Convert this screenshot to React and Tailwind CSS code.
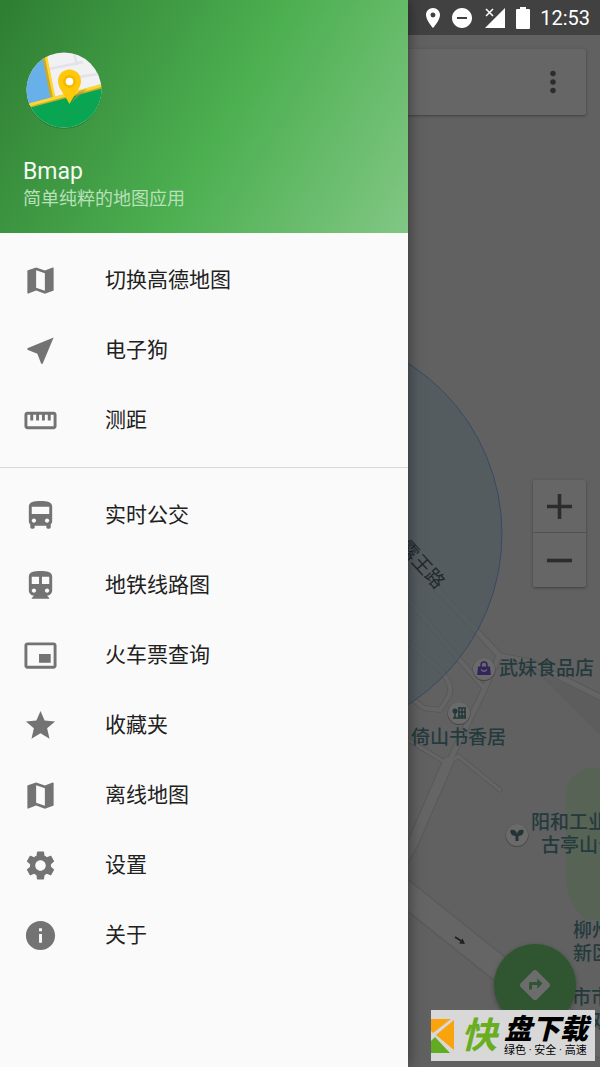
import React from 'react';
import {
    MdAdd,
    MdDirections,
    MdDirectionsBus,
    MdDirectionsSubway,
    MdDoNotDisturbOn,
    MdInfo,
    MdLocationOn,
    MdMap,
    MdMoreVert,
    MdNearMe,
    MdPictureInPictureAlt,
    MdRemove,
    MdSettings,
    MdStar,
    MdStraighten,
} from 'react-icons/md';

const tools = [
    { label: '切换高德地图', icon: MdMap },
    { label: '电子狗', icon: MdNearMe },
    { label: '测距', icon: MdStraighten },
];

const services = [
    { label: '实时公交', icon: MdDirectionsBus },
    { label: '地铁线路图', icon: MdDirectionsSubway },
    { label: '火车票查询', icon: MdPictureInPictureAlt },
    { label: '收藏夹', icon: MdStar },
    { label: '离线地图', icon: MdMap },
    { label: '设置', icon: MdSettings },
    { label: '关于', icon: MdInfo },
];

const Logo = () => (
    <svg viewBox="0 0 82 82" className="w-[82px] h-[82px]" aria-hidden="true">
        <defs>
            <clipPath id="logo-clip">
                <circle cx="41" cy="41" r="37.5" />
            </clipPath>
        </defs>
        <circle cx="41" cy="42.5" r="37.5" fill="#1b5e20" opacity="0.35" />
        <g clipPath="url(#logo-clip)">
            <rect width="82" height="82" fill="#f1f1f4" />
            <path d="M26 20 60 13M56 28 80 24M50 0l4 16" stroke="#e2e2e8" strokeWidth="2.500" fill="none" />
            <path d="M0 0h20l10 50L0 58Z" fill="#68b0ea" />
            <path d="M20 0 30 50" stroke="#d0a827" strokeWidth="4.500" />
            <path d="M21.500 0 31.500 50" stroke="#fdd835" strokeWidth="2.500" />
            <path d="M0 59 82 37v45H0Z" fill="#08a653" />
            <path d="M28 70 74 56M40 60l6 22" stroke="#12a04f" strokeWidth="2" />
            <path d="M0 58.500 82 36.500" stroke="#c9b22a" strokeWidth="4" />
            <path d="M0 57.500 82 35.500" stroke="#fdd835" strokeWidth="3" />
            <path d="M48 54 64 40 56 42Z" fill="#a8963a" opacity="0.6" />
        </g>
        <path d="M46.500 20.500C40 20.500 35 25.500 35 32c0 7.500 6.500 13 11.500 23C51.500 45 58 39.500 58 32c0-6.500-5-11.500-11.500-11.500Z" fill="#ffc80a" />
        <circle cx="46.500" cy="32.500" r="6.500" fill="#f6b900" />
        <circle cx="46.500" cy="32.500" r="3.800" fill="#fff" />
    </svg>
);

const MenuItem = ({ label, icon: Icon }) => (
    <li>
        <button type="button" className="flex h-[70px] w-full items-center gap-[47px] pl-[23px] text-left">
            <Icon className="size-[35px] shrink-0 text-[#737373]" />
            <span className="text-[21px] leading-7 text-[#212121]">{label}</span>
        </button>
    </li>
);

const Drawer = () => (
    <aside className="absolute inset-y-0 left-0 z-20 w-[68%] bg-[#fafafa] shadow-[0_0_14px_rgba(0,0,0,0.5)]">
        <header className="flex h-[233px] flex-col bg-[linear-gradient(120deg,#2e7d32,#4caf50_54%,#81c784)] pt-[49px] pl-[23px]">
            <Logo />
            <h1 className="mt-[26px] text-[23px] leading-[30px] text-[#f4fbf4]">Bmap</h1>
            <p className="text-lg leading-6 text-[#b8e0b9]">简单纯粹的地图应用</p>
        </header>
        <nav>
            <ul className="py-3">
                {tools.map((item) => <MenuItem key={item.label} {...item} />)}
            </ul>
            <ul className="border-t border-[#d8d8d8] py-3">
                {services.map((item) => <MenuItem key={item.label} {...item} />)}
            </ul>
        </nav>
    </aside>
);

// Roads, parks and the accuracy circle
const MapCanvas = () => (
    <svg
        viewBox="0 0 600 1067"
        preserveAspectRatio="xMaxYMin slice"
        className="absolute inset-0 h-full w-full"
        aria-hidden="true"
    >
        <path d="M540 675 600 735V697Z" fill="#5d5d5d" />
        <path d="M600 768h-14q-20 8-20 28v82q2 30 22 42h12Z" fill="#566355" />
        <g fill="none" strokeLinecap="round" strokeLinejoin="round">
            <g stroke="#595959">
                <path d="M436 588 500 656 530 662 600 697" strokeWidth="7" />
                <path d="M498 658 484 690 448 764" strokeWidth="7" />
                <path d="M400 590 484 688" strokeWidth="6" />
                <path d="M400 635 438 668Q454 684 449 696L440 710 424 708 400 690" strokeWidth="6" />
                <path d="M400 735 448 764 458 756 500 790" strokeWidth="5" />
                <path d="M448 762 412 845 380 900" strokeWidth="12" />
                <path d="M395 885 545 1005 600 1045" strokeWidth="26" />
            </g>
            <g stroke="#656565">
                <path d="M436 588 500 656 530 662 600 697" strokeWidth="5" />
                <path d="M498 658 484 690 448 764" strokeWidth="5" />
                <path d="M400 590 484 688" strokeWidth="4" />
                <path d="M400 635 438 668Q454 684 449 696L440 710 424 708 400 690" strokeWidth="4" />
                <path d="M400 735 448 764 458 756 500 790" strokeWidth="3" />
                <path d="M448 762 412 845 380 900" strokeWidth="10" />
                <path d="M395 885 545 1005 600 1045" strokeWidth="24" />
            </g>
        </g>
        <circle cx="300" cy="534" r="202" fill="#505a60" fillOpacity="0.7" stroke="#394a66" />
        <path d="m455 937 8 5" stroke="#222" strokeWidth="2" />
        <path d="m465 944-6-.5 3.500-5Z" fill="#222" />
    </svg>
);

const Pin = ({ className, children }) => (
    <svg viewBox="0 0 24 24" className={`absolute size-6 ${className}`} aria-hidden="true">
        <circle cx="12" cy="12.500" r="11.500" fill="#484848" />
        <circle cx="12" cy="12" r="11" fill="#6a6a6a" />
        {children}
    </svg>
);

const MapLabels = () => (
    <div className="text-[19px] leading-6 font-medium whitespace-nowrap text-[#243a3d]">
        <span className="absolute top-[553px] right-[150px] rotate-48 font-normal text-[#24282b]">露王路</span>

        <Pin className="top-[657px] right-[104px]">
            <path d="M6 9.500h12l.8 8.500H5.200Z" fill="#33225c" />
            <path d="M9 11V8a3 3 0 0 1 6 0v3" fill="none" stroke="#33225c" strokeWidth="1.500" />
            <path d="M9 12.500q3 3.500 6 0" fill="none" stroke="#6a6a6a" strokeWidth="1.300" />
        </Pin>
        <span className="absolute top-[657px] right-[6px]">武妹食品店</span>

        <Pin className="top-[701px] right-[129px]">
            <path d="M11 7h8M11 11h8M11 15h8M12 7v10M15 7v10M18 7v10M8 9v8M6 17h13" stroke="#22383a" strokeWidth="1.500" />
            <circle cx="8" cy="10" r="2.500" fill="#22383a" />
        </Pin>
        <span className="absolute top-[726px] right-[94px]">倚山书香居</span>

        <Pin className="top-[823px] right-[71px]">
            <path d="M12 18v-6" stroke="#243436" strokeWidth="3" />
            <path d="M12 13C7 13 5 11 5.500 7c4-1 6 1 6.500 4 .5-3 2.500-5 6.500-4 .5 4-1.500 6-6.500 6Z" fill="#243436" />
        </Pin>
        <span className="absolute top-[811px] left-[531px]">阳和工业</span>
        <span className="absolute top-[834px] left-[541px]">古亭山公园</span>
        <span className="absolute top-[919px] left-[573px]">柳州</span>
        <span className="absolute top-[942px] left-[573px]">新区</span>
        <span className="absolute top-[986px] left-[572px]">市市</span>
        <span className="absolute top-[1010px] left-[591px]">双</span>
    </div>
);

const StatusBar = () => (
    <div className="relative flex h-[35px] items-center justify-end gap-2.5 bg-[#414141] pr-2.5 text-white">
        <div className="flex gap-[5px]">
            <MdLocationOn className="size-6" />
            <MdDoNotDisturbOn className="size-6" />
        </div>
        <svg viewBox="0 0 22 22" className="size-[22px]" aria-hidden="true">
            <path d="M21 1v20H1l7-7 3-3Z" fill="currentColor" />
            <path d="m2 2 7 7m0-7-7 7" stroke="#414141" strokeWidth="4" />
            <path d="m2 2 7 7m0-7-7 7" stroke="currentColor" strokeWidth="1.500" />
        </svg>
        <svg viewBox="0 0 14 22" className="h-[22px] w-[14px]" aria-hidden="true">
            <path d="M4 0h6v2h3q1 0 1 1v18q0 1-1 1H1q-1 0-1-1V3q0-1 1-1h3Z" fill="currentColor" />
        </svg>
        <time className="text-xl">12:53</time>
    </div>
);

const Watermark = () => (
    <div className="absolute right-[5px] bottom-[6px] z-30 flex h-[51px] w-[164px] items-center gap-[7px] bg-[#d8d8d8]">
        <svg viewBox="0 0 23 34" className="h-[34px] w-[23px] shrink-0" aria-hidden="true">
            <path d="M0 0h20L2 14 0 12Z" fill="#f9a30d" />
            <path d="M23 1v30L5 16Z" fill="#f9a30d" />
            <path d="M0 22 4 18 19 34H0Z" fill="#62ab22" />
        </svg>
        <span className="text-4xl font-bold text-[#69ae1e] italic">快</span>
        <div className="flex flex-col whitespace-nowrap text-black">
            <span className="text-[28px] leading-[30px] font-black italic">盘下载</span>
            <span className="text-[11px] leading-3">绿色 · 安全 · 高速</span>
        </div>
    </div>
);

const App = () => {
    return (
        <div className="relative min-h-screen overflow-hidden bg-[#616161] font-[Roboto,'Noto_Sans_CJK_SC',sans-serif]">
            <MapCanvas />
            <MapLabels />
            <StatusBar />

            {/* Search card */}
            <div className="relative mx-[14px] mt-[14px] flex h-[66px] items-center justify-end rounded-xs bg-[#666666] pr-4 shadow-[0_1px_3px_rgba(0,0,0,0.35)]">
                <button type="button" aria-label="更多">
                    <MdMoreVert className="size-[34px] text-[#2c2c2c]" />
                </button>
            </div>

            {/* Zoom controls */}
            <div className="absolute top-[480px] right-[14px] flex w-[53px] flex-col divide-y divide-[#505050] rounded-xs bg-[#666666] text-[#2c2c2c] shadow-[0_1px_3px_rgba(0,0,0,0.35)]">
                <button type="button" aria-label="放大" className="flex h-[53px] items-center justify-center">
                    <MdAdd className="size-[43px]" />
                </button>
                <button type="button" aria-label="缩小" className="flex h-[54px] items-center justify-center">
                    <MdRemove className="size-[43px]" />
                </button>
            </div>

            <button
                type="button"
                aria-label="路线"
                className="absolute right-6 bottom-[41px] flex size-[82px] items-center justify-center rounded-full bg-[#2f5531] shadow-[0_2px_5px_rgba(0,0,0,0.3)]"
            >
                <MdDirections className="size-9 text-[#6c6c6c]" />
            </button>

            <Drawer />
            <Watermark />
        </div>
    );
};

export default App;
